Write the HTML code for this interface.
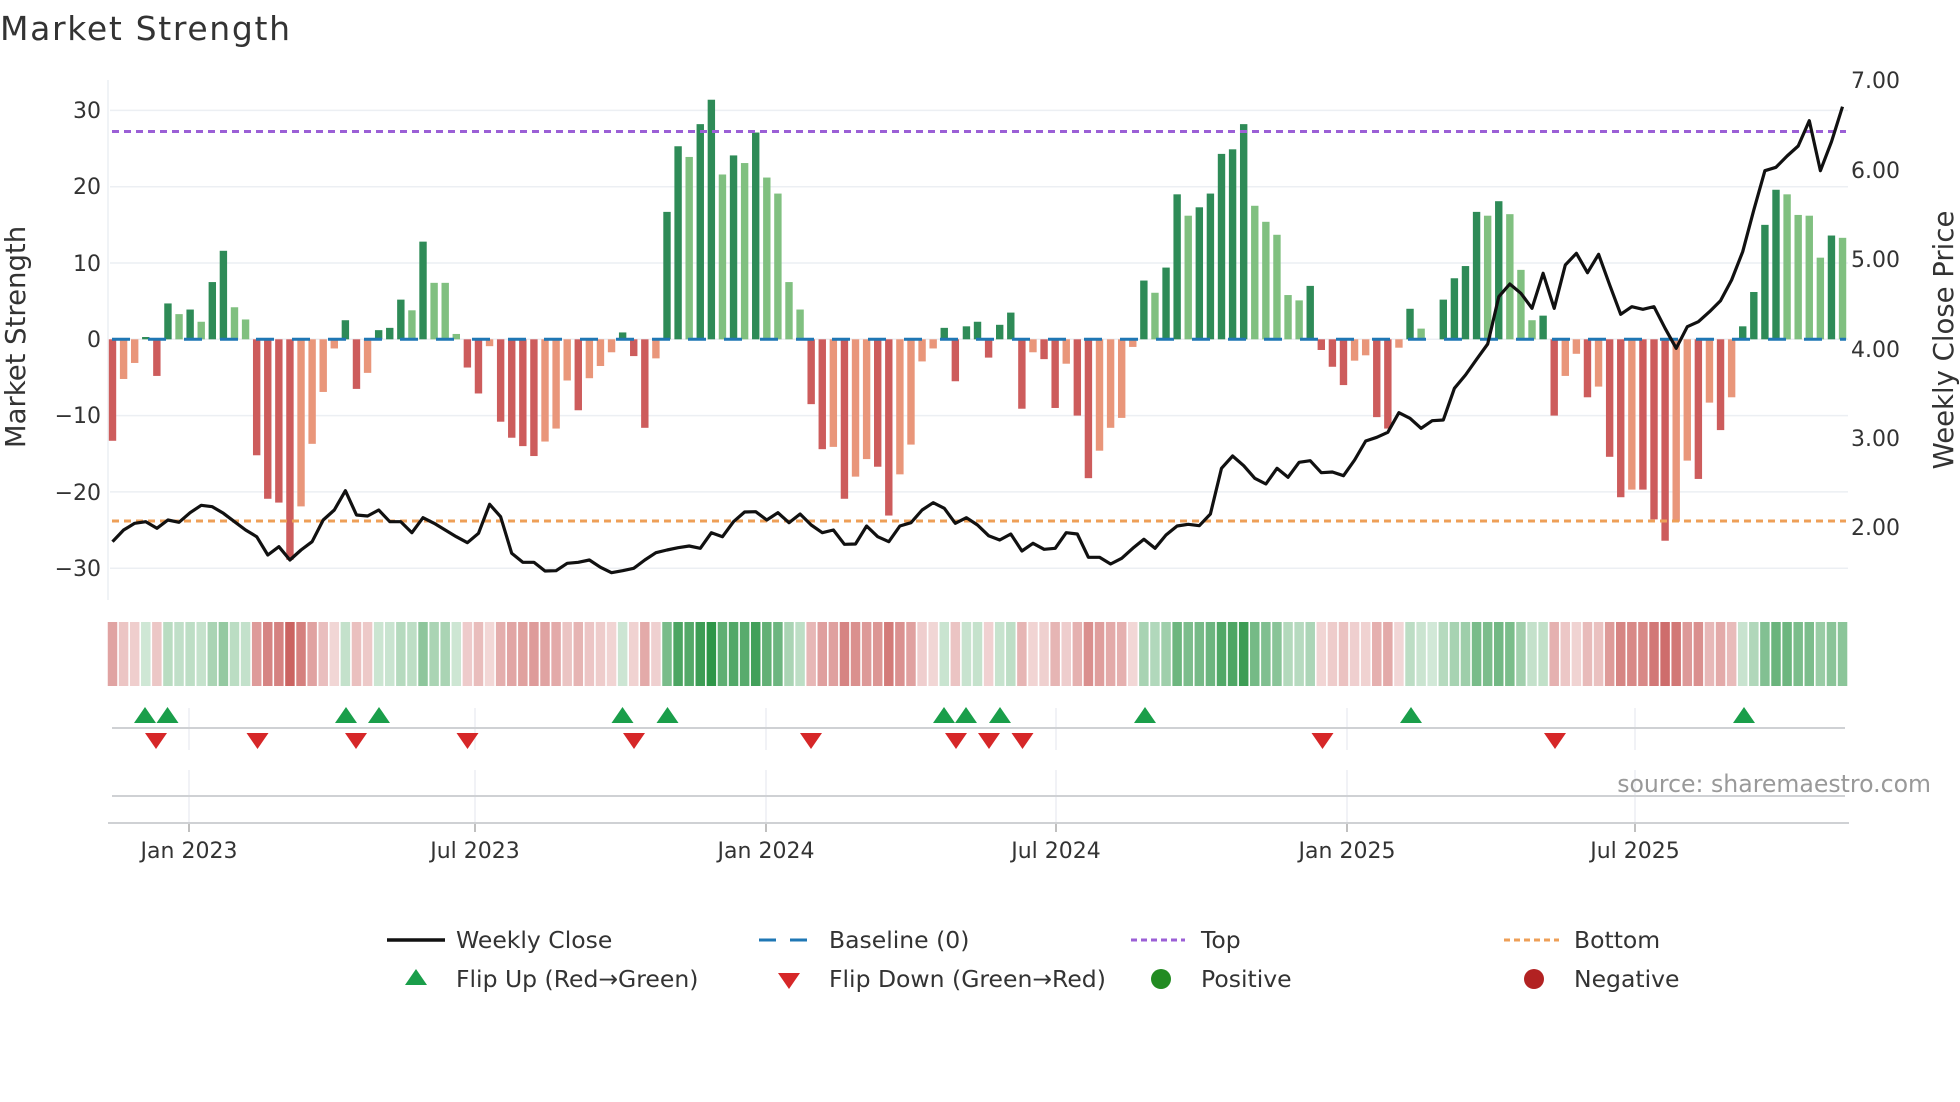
<!DOCTYPE html>
<html><head><meta charset="utf-8">
<style>
html,body{margin:0;padding:0;background:#fff;}
svg{display:block;font-family:"DejaVu Sans","Liberation Sans",sans-serif;}
.t{fill:#333;font-size:22px;}
.lg{fill:#333;font-size:23.5px;}
</style></head>
<body>
<svg id="s" width="1960" height="1102" viewBox="0 0 1960 1102" xmlns="http://www.w3.org/2000/svg">
<rect width="1960" height="1102" fill="#fff"/>
<text x="0" y="40" style="font-size:33px;fill:#333" textLength="290">Market Strength</text>
<g id="grid"></g>
<line x1="108" y1="80" x2="108" y2="600" stroke="#eceff3" stroke-width="1.5"/>
<g id="bars"></g>
<line x1="112" y1="339.3" x2="1846" y2="339.3" stroke="#1f77b4" stroke-width="3" stroke-dasharray="18 18"/>
<line x1="112" y1="131.5" x2="1846" y2="131.5" stroke="#9b5fd6" stroke-width="3" stroke-dasharray="7 5"/>
<line x1="112" y1="521" x2="1846" y2="521" stroke="#ee9f57" stroke-width="3" stroke-dasharray="7 5"/>
<polyline id="price" fill="none" stroke="#111" stroke-width="3.2" stroke-linejoin="round"/>
<g class="t" text-anchor="end">
<text x="101" y="118">30</text><text x="101" y="194">20</text><text x="101" y="271">10</text>
<text x="101" y="347">0</text><text x="101" y="423">−10</text><text x="101" y="500">−20</text><text x="101" y="576">−30</text>
</g>
<g class="t">
<text x="1851" y="88">7.00</text><text x="1851" y="178">6.00</text><text x="1851" y="267">5.00</text>
<text x="1851" y="357">4.00</text><text x="1851" y="446">3.00</text><text x="1851" y="535">2.00</text>
</g>
<text class="t" transform="translate(25,337) rotate(-90)" text-anchor="middle" style="font-size:27.5px">Market Strength</text>
<text class="t" transform="translate(1953,340) rotate(-90)" text-anchor="middle" style="font-size:27.5px">Weekly Close Price</text>
<g id="strip"></g>
<g id="lower"></g>
<line x1="112" y1="728" x2="1845" y2="728" stroke="#cfd1d4" stroke-width="2"/>
<line x1="112" y1="796" x2="1845" y2="796" stroke="#cfd1d4" stroke-width="2"/>
<line x1="108" y1="823" x2="1849" y2="823" stroke="#cfd1d4" stroke-width="2"/>
<g id="marks"></g>
<text x="1931" y="792" text-anchor="end" style="font-size:23.6px;fill:#999">source: sharemaestro.com</text>
<g class="t" text-anchor="middle">
<text x="189" y="858">Jan 2023</text><text x="475" y="858">Jul 2023</text><text x="766" y="858">Jan 2024</text>
<text x="1056" y="858">Jul 2024</text><text x="1347" y="858">Jan 2025</text><text x="1635" y="858">Jul 2025</text>
</g>
<line x1="387" y1="940" x2="445" y2="940" stroke="#111" stroke-width="3.5"/>
<text class="lg" x="456" y="948">Weekly Close</text>
<line x1="759" y1="940" x2="814" y2="940" stroke="#1f77b4" stroke-width="3" stroke-dasharray="17 14"/>
<text class="lg" x="829" y="948">Baseline (0)</text>
<line x1="1131" y1="940" x2="1185" y2="940" stroke="#9b5fd6" stroke-width="3" stroke-dasharray="6 4"/>
<text class="lg" x="1201" y="948">Top</text>
<line x1="1504" y1="940" x2="1559" y2="940" stroke="#ee9f57" stroke-width="3" stroke-dasharray="6 4"/>
<text class="lg" x="1574" y="948">Bottom</text>
<polygon points="416,969 427,985 405,985" fill="#1a9e4a"/>
<text class="lg" x="456" y="987">Flip Up (Red→Green)</text>
<polygon points="778,973 800,973 789,989" fill="#d62728"/>
<text class="lg" x="829" y="987">Flip Down (Green→Red)</text>
<circle cx="1161" cy="979" r="10" fill="#228b22"/>
<text class="lg" x="1201" y="987">Positive</text>
<circle cx="1534" cy="979" r="10" fill="#b22222"/>
<text class="lg" x="1574" y="987">Negative</text>
</svg>
<script>
var NS="http://www.w3.org/2000/svg";
function el(p,t,a){var e=document.createElementNS(NS,t);for(var k in a)e.setAttribute(k,a[k]);p.appendChild(e);return e;}
var B=[[-13.3,1],[-5.2,0],[-3.1,0],[0.3,1],[-4.8,1],[4.7,1],[3.3,0],[3.9,1],[2.3,0],[7.5,1],[11.6,1],[4.2,0],[2.6,0],[-15.2,1],[-20.9,1],[-21.4,1],[-28.9,1],[-21.9,0],[-13.7,0],[-6.9,0],[-1.2,0],[2.5,1],[-6.5,1],[-4.4,0],[1.2,1],[1.5,1],[5.2,1],[3.8,0],[12.8,1],[7.4,0],[7.4,0],[0.7,0],[-3.7,1],[-7.1,1],[-0.9,0],[-10.8,1],[-12.9,1],[-14,1],[-15.3,1],[-13.4,0],[-11.7,0],[-5.4,0],[-9.3,1],[-5.1,0],[-3.5,0],[-1.7,0],[0.9,1],[-2.2,1],[-11.6,1],[-2.5,0],[16.7,1],[25.3,1],[23.9,0],[28.2,1],[31.4,1],[21.6,0],[24.1,1],[23.1,0],[27.1,1],[21.2,0],[19.1,0],[7.5,0],[3.9,0],[-8.5,1],[-14.4,1],[-14.1,0],[-20.9,1],[-18,0],[-15.7,0],[-16.7,1],[-23.1,1],[-17.7,0],[-13.8,0],[-2.9,0],[-1.2,0],[1.5,1],[-5.5,1],[1.7,1],[2.3,1],[-2.4,1],[1.9,1],[3.5,1],[-9.1,1],[-1.7,0],[-2.6,1],[-9,1],[-3.2,0],[-10,1],[-18.2,1],[-14.6,0],[-11.6,0],[-10.3,0],[-1,0],[7.7,1],[6.1,0],[9.4,1],[19,1],[16.2,0],[17.3,1],[19.1,1],[24.3,1],[24.9,1],[28.2,1],[17.5,0],[15.4,0],[13.7,0],[5.8,0],[5.1,0],[7,1],[-1.4,1],[-3.6,1],[-6,1],[-2.8,0],[-2.1,0],[-10.2,1],[-11.7,1],[-1.1,0],[4,1],[1.4,0],[0,0],[5.2,1],[8,1],[9.6,1],[16.7,1],[16.2,0],[18.1,1],[16.4,0],[9.1,0],[2.5,0],[3.1,1],[-10,1],[-4.8,0],[-1.9,0],[-7.6,1],[-6.2,0],[-15.4,1],[-20.7,1],[-19.7,0],[-19.7,1],[-23.6,1],[-26.4,1],[-23.9,0],[-15.9,0],[-18.3,1],[-8.3,0],[-11.9,1],[-7.6,0],[1.7,1],[6.2,1],[15,1],[19.6,1],[19,0],[16.3,0],[16.2,0],[10.7,0],[13.6,1],[13.3,0]];
var P=[1385,1350,1330,1325,1345,1320,1327,1298,1276,1280,1300,1325,1350,1370,1425,1400,1440,1410,1385,1320,1290,1232,1305,1308,1290,1325,1325,1358,1313,1330,1350,1370,1388,1360,1273,1310,1420,1447,1447,1473,1472,1450,1447,
1440,1462,1478,1472,1465,1440,1418,1410,1403,1398,1405,1358,1370,1325,1296,1295,1320,1298,1328,1302,1335,1358,1350,1393,1392,1338,1370,1385,1338,1328,1290,1268,1285,1330,1313,1335,1367,1380,1362,1413,1390,1408,
1405,1358,1362,1432,1432,1452,1435,1405,1378,1405,1365,1338,1333,1337,1302,1165,1128,1157,1195,1212,1165,1192,1147,1142,1178,1176,1187,1140,1083,1072,1057,998,1015,1045,1022,1020,925,885,838,792,650,612,
640,685,580,685,555,520,578,523,615,703,680,688,680,745,805,740,725,695,662,600,515,390,272,262,228,198,122,272,185,80];
var Z=339.3,U=7.63,X0=112.5,DX=11.09;
var g=document.getElementById('grid');
[30,20,10,0,-10,-20,-30].forEach(function(v){var y=Z-v*U;el(g,'line',{x1:110,x2:1848,y1:y,y2:y,stroke:'#eceff3','stroke-width':1.5});});
var bg=document.getElementById('bars'),st=document.getElementById('strip');
B.forEach(function(b,i){var v=b[0],x=X0+i*DX,y=Z-v*U;
 var c=v>=0?(b[1]?'#2e8b57':'#80c080'):(b[1]?'#cd5c5c':'#e9967a');
 if(v!=0) el(bg,'rect',{x:x-3.7,y:Math.min(y,Z),width:7.4,height:Math.abs(v*U),fill:c});
 var a=0.22+0.78*Math.min(Math.abs(v)/31,1);
 var sc=v>=0?'rgba(46,150,72,'+a.toFixed(3)+')':'rgba(200,90,88,'+a.toFixed(3)+')';
 el(st,'rect',{x:x-DX/2+0.8,y:622,width:DX-1.6,height:64,fill:sc});
});
document.getElementById('price').setAttribute('points',P.map(function(p,i){return (X0+i*DX).toFixed(1)+','+(80+p/3).toFixed(1);}).join(' '));
var lw=document.getElementById('lower');
[189,475,766,1056,1347,1635].forEach(function(x){
 el(lw,'line',{x1:x,x2:x,y1:708,y2:750,stroke:'#eceef2','stroke-width':1.5});
 el(lw,'line',{x1:x,x2:x,y1:770,y2:823,stroke:'#eceef2','stroke-width':1.5});
 el(lw,'line',{x1:x,x2:x,y1:823,y2:832,stroke:'#aaa','stroke-width':1.5});
});
var m=document.getElementById('marks');
[145,167.5,346,379,622.5,667.5,944,966,1000,1145,1411,1744].forEach(function(x){el(m,'polygon',{points:(x)+',707 '+(x+11)+',723 '+(x-11)+',723',fill:'#1a9e4a'});});
[156,257.5,356,467.5,634,811,956,989,1022.5,1322.5,1555].forEach(function(x){el(m,'polygon',{points:(x-11)+',733 '+(x+11)+',733 '+x+',749',fill:'#d62728'});});
</script>
</body></html>
